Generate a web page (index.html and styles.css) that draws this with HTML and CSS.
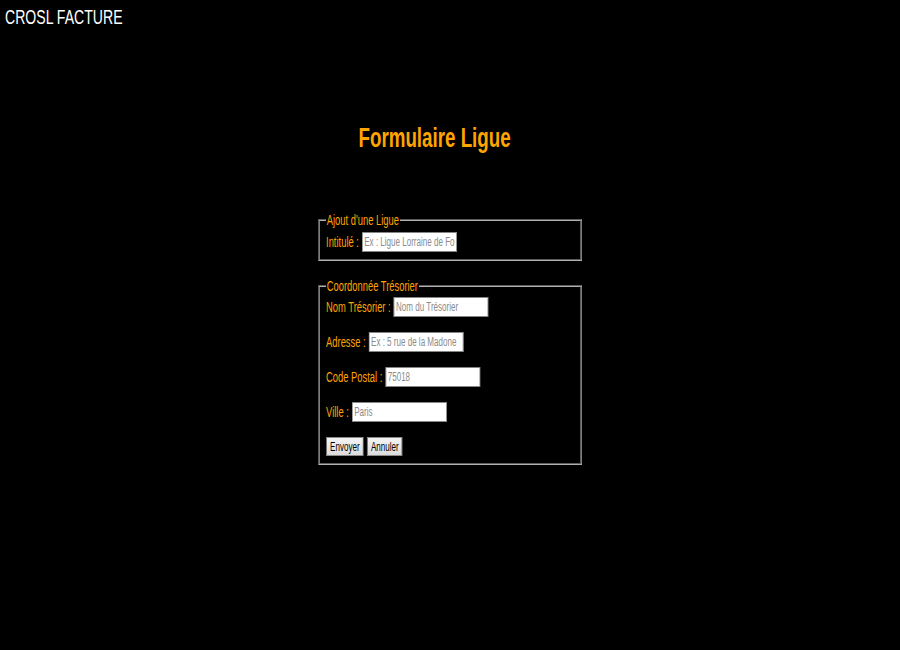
FILE: index.html
```html
<!DOCTYPE html>
<html lang="fr">
<head>
<meta charset="utf-8">
<title>CROSL FACTURE</title>
<link rel="stylesheet" href="styles.css">
</head>
<body>
<div class="page">
  <header class="brand"><span class="brand-text">CROSL FACTURE</span></header>
  <h1 class="title"><span class="title-text">Formulaire Ligue</span></h1>
  <form class="form">
    <fieldset class="group group-ligue">
      <legend>Ajout d'une Ligue</legend>
      <div class="row">
        <label for="intitule">Intitulé :</label>
        <input id="intitule" type="text" placeholder="Ex : Ligue Lorraine de Foot">
      </div>
    </fieldset>
    <fieldset class="group group-tresorier">
      <legend>Coordonnée Trésorier</legend>
      <div class="row">
        <label for="nom">Nom Trésorier :</label>
        <input id="nom" type="text" placeholder="Nom du Trésorier">
      </div>
      <div class="row">
        <label for="adresse">Adresse :</label>
        <input id="adresse" type="text" placeholder="Ex : 5 rue de la Madone">
      </div>
      <div class="row">
        <label for="cp">Code Postal :</label>
        <input id="cp" type="text" placeholder="75018">
      </div>
      <div class="row">
        <label for="ville">Ville :</label>
        <input id="ville" type="text" placeholder="Paris">
      </div>
      <div class="actions">
        <button type="submit" class="btn">Envoyer</button>
        <button type="reset" class="btn">Annuler</button>
      </div>
    </fieldset>
  </form>
</div>
</body>
</html>
```
FILE: styles.css
```css
html, body {
  margin: 0;
  padding: 0;
  background: #000;
  overflow: hidden;
}
body {
  width: 900px;
  height: 650px;
  font-family: "Liberation Sans", Arial, sans-serif;
}
.page {
  width: 900px;
  height: 650px;
}
.brand {
  color: #fff;
  font-size: 21px;
  line-height: 23px;
  padding: 5px 0 0 5px;
}
.brand-text {
  display: inline-block;
  transform: scaleX(0.67);
  transform-origin: 0 0;
}
.title {
  color: #ffa500;
  font-size: 28px;
  font-weight: bold;
  line-height: 32px;
  text-align: center;
  margin: 94px 0 0 0;
  padding-right: 31px;
}
.title-text {
  display: inline-block;
  transform: scaleX(0.67);
}
.form {
  display: flex;
  flex-direction: column;
  align-items: center;
  margin-top: 58px;
}
.group {
  width: 394px;
  box-sizing: border-box;
  margin: 0 0 17px 0;
  border-style: groove;
  border-color: #b0b0b0;
  border-width: 2px 3px;
  padding: 0 10px 7px 9px;
  color: #ffa500;
  font-size: 14px;
  transform: scaleX(0.67);
}
.group legend {
  padding: 0 1px;
  font-size: 14px;
  line-height: 16px;
}
.row {
  display: flex;
  align-items: center;
  gap: 5px;
  height: 20px;
  margin-top: 15px;
}
.group-ligue .row:first-of-type {
  margin-top: 4px;
}
.group-tresorier .row:first-of-type {
  margin-top: 3px;
}
.row label {
  color: #ffa500;
  font-size: 14px;
  line-height: 16px;
}
.row input {
  width: 141px;
  height: 20px;
  box-sizing: border-box;
  border: 1px solid #858585;
  padding: 1px 2px;
  font-family: "Liberation Sans", Arial, sans-serif;
  font-size: 12px;
  background: #fff;
  color: #000;
}
.row input::placeholder {
  color: #8a8a8a;
}
.actions {
  display: flex;
  gap: 5px;
  margin-top: 15px;
}
.btn {
  height: 19px;
  padding: 0 5px;
  font-family: "Liberation Sans", Arial, sans-serif;
  font-size: 12px;
  color: #000;
  background: linear-gradient(#f4f4f4, #dcdcdc);
  border: 1px solid #8a8a8a;
  border-radius: 0;
}
```
